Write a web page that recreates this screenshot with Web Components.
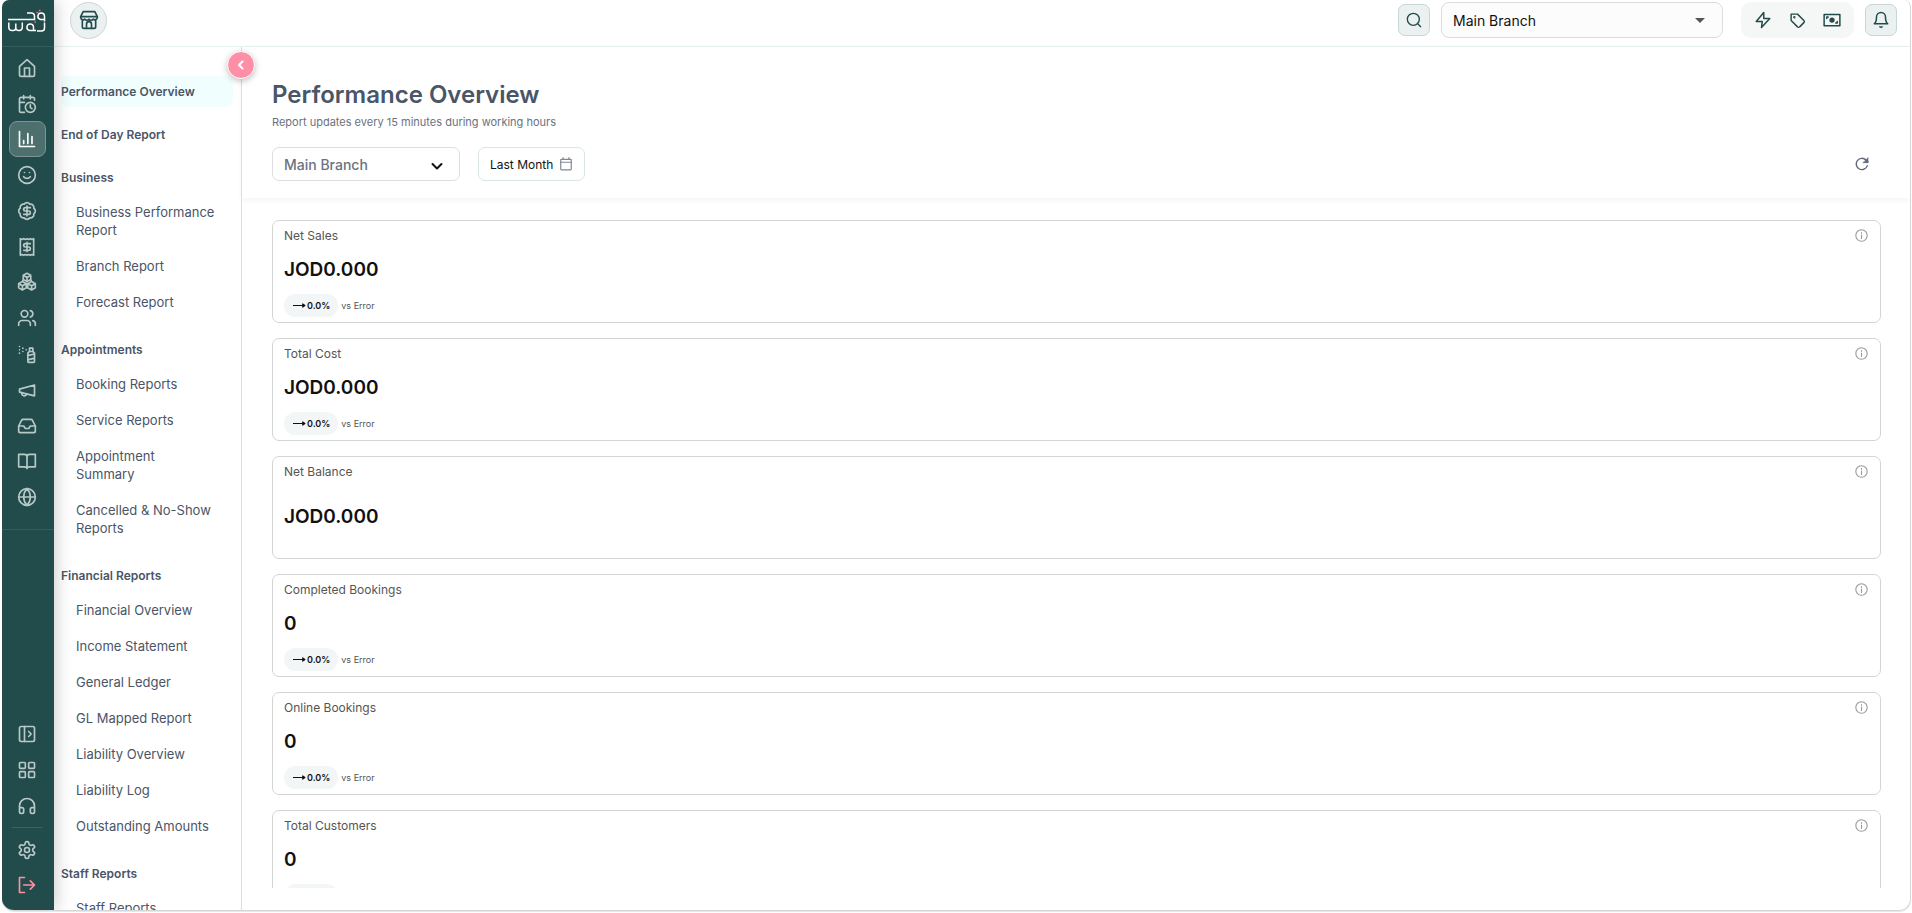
<!DOCTYPE html>
<html lang="en">
<head>
<meta charset="utf-8">
<title>Performance Overview</title>
<style>
  html, body {
    height: 100%;
    margin: 0;
  }
  body {
    background: #fff;
    font-family: Inter, "Open Sans", sans-serif;
    color: #4a5568;
    overflow: hidden;
  }
</style>
</head>
<body>
<app-shell></app-shell>

<script>
const icons = {
  home: '<path d="M3 10 12 2l9 8v10a2 2 0 0 1-2 2H5a2 2 0 0 1-2-2z"/><path d="M9 22V12h6v10"/>',
  calendarClock: '<path d="M21 7.500V6a2 2 0 0 0-2-2H5a2 2 0 0 0-2 2v14a2 2 0 0 0 2 2h4"/><path d="M16 2v4M8 2v4M3 10h6"/><circle cx="16" cy="16" r="6"/><path d="M16 13v3.200l2 1.300"/>',
  chart: '<path d="M3 3v18h18"/><path d="M8 17.500V14M13 17.500V5.500M18 17.500V9"/>',
  smile: '<circle cx="12" cy="12" r="10"/><path d="M8 14s1.500 2 4 2 4-2 4-2M9 9h.01M15 9h.01"/>',
  badge: '<path d="M3.850 8.620a4 4 0 0 1 4.780-4.770 4 4 0 0 1 6.740 0 4 4 0 0 1 4.780 4.780 4 4 0 0 1 0 6.740 4 4 0 0 1-4.770 4.780 4 4 0 0 1-6.750 0 4 4 0 0 1-4.780-4.770 4 4 0 0 1 0-6.760z"/><path d="M16 8h-6a2 2 0 1 0 0 4h4a2 2 0 1 1 0 4H8M12 18V6"/>',
  receipt: '<path d="M4 2v20l2-1 2 1 2-1 2 1 2-1 2 1 2-1 2 1V2l-2 1-2-1-2 1-2-1-2 1-2-1-2 1z"/><path d="M16 8h-6a2 2 0 1 0 0 4h4a2 2 0 1 1 0 4H8M12 17.500v-11"/>',
  boxes: '<path d="M12 1.500 7.500 4v5l4.500 2.500L16.500 9V4zM7.500 4 12 6.500 16.500 4M12 6.500v5M6.500 11.500 2 14v5l4.500 2.500L11 19v-5zM2 14l4.500 2.500L11 14M6.500 16.500v5M17.500 11.500 13 14v5l4.500 2.500L22 19v-5zM13 14l4.500 2.500L22 14M17.500 16.500v5M7.500 9l-1 2.500M16.500 9l1 2.500M11 14h2M11 19h2"/>',
  users: '<path d="M16 21v-2a4 4 0 0 0-4-4H6a4 4 0 0 0-4 4v2"/><circle cx="9" cy="7" r="4"/><path d="M22 21v-2a4 4 0 0 0-3-3.870M16 3.130a4 4 0 0 1 0 7.750"/>',
  spray: '<path d="M3 3h.01M7 5h.01M11 7h.01M3 7h.01M7 9h.01M3 11h.01"/><path d="M15 5h4v4h-4z"/><path d="m19 9 2 2v10a1 1 0 0 1-1 1h-6a1 1 0 0 1-1-1V11l2-2M13 14l8-2M13 19l8-2"/>',
  megaphone: '<path d="m3 11 18-5v13L3 14.500z"/><path d="M11.600 16.800a3 3 0 1 1-5.800-1.600"/>',
  inbox: '<path d="M22 12h-6l-2 3h-4l-2-3H2"/><path d="M5.450 5.110 2 12v6a2 2 0 0 0 2 2h16a2 2 0 0 0 2-2v-6l-3.450-6.890A2 2 0 0 0 16.760 4H7.240a2 2 0 0 0-1.790 1.110z"/>',
  book: '<path d="M2 4h7a3 3 0 0 1 3 3v14a3 3 0 0 0-3-2H2zM22 4h-7a3 3 0 0 0-3 3v14a3 3 0 0 1 3-2h7z"/>',
  globe: '<circle cx="12" cy="12" r="10"/><path d="M12 2a14.500 14.500 0 0 0 0 20 14.500 14.500 0 0 0 0-20M2 12h20"/>',
  panel: '<rect x="3" y="3" width="18" height="18" rx="2"/><path d="M9 3v18M14 9l3 3-3 3"/>',
  grid: '<rect x="3" y="3" width="7" height="7" rx="1"/><rect x="14" y="3" width="7" height="7" rx="1"/><rect x="14" y="14" width="7" height="7" rx="1"/><rect x="3" y="14" width="7" height="7" rx="1"/>',
  headphones: '<path d="M3 14h3a2 2 0 0 1 2 2v3a2 2 0 0 1-2 2H5a2 2 0 0 1-2-2v-7a9 9 0 0 1 18 0v7a2 2 0 0 1-2 2h-1a2 2 0 0 1-2-2v-3a2 2 0 0 1 2-2h3"/>',
  gear: '<path d="M12.220 2h-.44a2 2 0 0 0-2 2v.18a2 2 0 0 1-1 1.730l-.43.25a2 2 0 0 1-2 0l-.15-.08a2 2 0 0 0-2.730.73l-.22.38a2 2 0 0 0 .73 2.730l.15.1a2 2 0 0 1 1 1.720v.51a2 2 0 0 1-1 1.740l-.15.09a2 2 0 0 0-.73 2.730l.22.38a2 2 0 0 0 2.730.73l.15-.08a2 2 0 0 1 2 0l.43.25a2 2 0 0 1 1 1.730V20a2 2 0 0 0 2 2h.44a2 2 0 0 0 2-2v-.18a2 2 0 0 1 1-1.730l.43-.25a2 2 0 0 1 2 0l.15.08a2 2 0 0 0 2.730-.73l.22-.39a2 2 0 0 0-.73-2.730l-.15-.08a2 2 0 0 1-1-1.740v-.5a2 2 0 0 1 1-1.740l.15-.09a2 2 0 0 0 .73-2.730l-.22-.38a2 2 0 0 0-2.730-.73l-.15.08a2 2 0 0 1-2 0l-.43-.25a2 2 0 0 1-1-1.730V4a2 2 0 0 0-2-2z"/><circle cx="12" cy="12" r="3"/>',
  logout: '<path d="M9 3H3v18h6M8 12h13M16 7l5 5-5 5"/>',
  shop: '<path d="M5 2h14l3 6v1a3 3 0 0 1-5 2 3 3 0 0 1-5 0 3 3 0 0 1-5 0 3 3 0 0 1-5-2V8zM2 8h20M4 12v8a2 2 0 0 0 2 2h12a2 2 0 0 0 2-2v-8M9 22v-5a3 3 0 0 1 6 0v5"/>',
  search: '<circle cx="11" cy="11" r="9"/><path d="m18 18 4 4"/>',
  bolt: '<path d="M13 2 3 14h8l-1 8 11-12h-8z"/>',
  tag: '<path d="M3 3h9l9 9a2 2 0 0 1 0 3l-6 6a2 2 0 0 1-3 0l-9-9z"/><circle cx="7.500" cy="7.500" r=".7"/>',
  cash: '<path d="M1.500 4.500h21v15h-21z"/><circle cx="12" cy="12" r="2.500" fill="currentColor"/><path d="M5 10V8h2M19 14v2h-2"/>',
  bell: '<path d="M6 8a6 6 0 0 1 12 0c0 7 3 9 3 9H3s3-2 3-9M10.500 21a2 2 0 0 0 3 0"/>',
  left: '<path d="m15 5-7 7 7 7"/>',
  down: '<path d="m3 8 9 9 9-9"/>',
  calendar: '<rect x="3" y="4" width="18" height="18" rx="1"/><path d="M7 1v3M17 1v3M3 9h18"/>',
  refresh: '<path d="M20 14.500A8.500 8.500 0 1 1 18 6l3 3"/><path d="M21 3v7h-7z" fill="currentColor" stroke-width="1"/>',
  info: '<circle cx="12" cy="12" r="10.500"/><path d="M12 11v6.500M12 6.500v1.500"/>',
  arrow: '<path d="M0 12h21M18 9l4 3-4 3z" fill="currentColor"/>'
};

class BaseElement extends HTMLElement {
  constructor() {
    super();
    this.attachShadow({mode: 'open'});
  }

  connectedCallback() {
    this.shadowRoot.innerHTML = this.template;
  }
}

customElements.define('svg-icon', class SvgIcon extends BaseElement {
  get template() {
    const size = this.getAttribute('size') || 20;
    const stroke = this.getAttribute('stroke') || 2;
    return `
<style>
  :host {
    display: inline-flex;
    flex: none;
  }
</style>
<svg width="${size}" height="${size}" viewBox="0 0 24 24" fill="none" stroke="currentColor" stroke-width="${stroke}" stroke-linecap="round" stroke-linejoin="round" aria-hidden="true">${icons[this.getAttribute('name')]}</svg>
    `;
  }
});

customElements.define('brand-logo', class BrandLogo extends BaseElement {
  get template() {
    return `
<style>
  :host {
    display: block;
    height: 24px;
  }
</style>
<svg width="38" height="24" viewBox="0 0 38 24" fill="none" stroke="#fff" stroke-width="1.500" role="img" aria-label="Logo">
  <path d="M0 10.500h26.500V7a3 3 0 0 0-3-3H19"/>
  <path d="M37 10.500h-4.500A3.300 3.300 0 1 1 36.500 7v5.500"/>
  <path d="M.8 13.500v5a3 3 0 0 0 3 3h1.500a2.500 2.500 0 0 0 2.500-2.500v-4.500M7.800 19a2.500 2.500 0 0 0 2.500 2.500h1a3 3 0 0 0 3-3v-5"/>
  <path d="M25.500 21.500h-4a3.300 3.300 0 1 1 4-3.500v3.500h2.500M29 22h4.500a3 3 0 0 0 3-3v-5.500"/>
  <path d="M28.500 3.500h2M31 1.500h1.500M26.500 13h1.500" stroke="#ff6b81"/>
</svg>
    `;
  }
});

customElements.define('rail-button', class RailButton extends BaseElement {
  get template() {
    return `
<style>
  :host {
    display: flex;
    flex: 1;
    min-height: 0;
    align-items: center;
    justify-content: center;
    color: #b8c8c7;
  }
  :host([danger]) {
    color: #ff8fa3;
  }
  button {
    display: flex;
    align-items: center;
    justify-content: center;
    width: 37px;
    height: 36px;
    padding: 0;
    border: 1px solid transparent;
    border-radius: 8px;
    background: none;
    color: inherit;
  }
  :host([active]) button {
    background: #4d706f;
    border-color: #7b9594;
    color: #fff;
  }
</style>
<button aria-label="${this.getAttribute('label')}"><svg-icon name="${this.getAttribute('icon')}"></svg-icon></button>
    `;
  }
});

customElements.define('nav-rail', class NavRail extends BaseElement {
  get template() {
    const main = ['home', 'calendarClock', 'chart', 'smile', 'badge', 'receipt', 'boxes', 'users', 'spray', 'megaphone', 'inbox', 'book', 'globe'];
    const tools = ['panel', 'grid', 'headphones'];
    const button = name => `<rail-button icon="${name}" label="${name}"${name === 'chart' ? ' active' : ''}></rail-button>`;
    return `
<style>
  :host {
    display: flex;
    flex-direction: column;
    flex: none;
    width: 52px;
    box-sizing: border-box;
    background: #214c4b;
    box-shadow: 2px 0 16px rgba(0,0,0,.2);
    z-index: 2;
  }
  .logo {
    display: flex;
    justify-content: center;
    box-sizing: border-box;
    height: 47px;
    padding: 9px 2px 0 0;
    border-bottom: 1px solid #34605c;
  }
  nav {
    display: flex;
    flex-direction: column;
    padding-right: 2px;
  }
  .main {
    height: 465px;
    padding-top: 3px;
    padding-bottom: 14px;
    border-bottom: 1px solid #34605c;
  }
  .tools {
    height: 108px;
    margin-top: auto;
  }
  .account {
    height: 71px;
    padding-bottom: 7px;
  }
  hr {
    width: 30px;
    height: 1px;
    margin: 3px 11px 4px 10px;
    border: 0;
    background: #3d6361;
  }
</style>
<div class="logo"><brand-logo></brand-logo></div>
<nav class="main">${main.map(button).join('')}</nav>
<nav class="tools">${tools.map(button).join('')}</nav>
<hr>
<nav class="account">
  <rail-button icon="gear" label="Settings"></rail-button>
  <rail-button icon="logout" label="Log out" danger></rail-button>
</nav>
    `;
  }
});

customElements.define('top-bar', class TopBar extends BaseElement {
  get template() {
    return `
<style>
  :host {
    display: flex;
    align-items: center;
    flex: none;
    box-sizing: border-box;
    height: 47px;
    padding: 0 13px 6px 16px;
    border-bottom: 1px solid #e8f1f1;
  }
  button {
    display: flex;
    align-items: center;
    justify-content: center;
    padding: 0;
    border: 0;
    background: none;
    color: #214c4b;
  }
  .shop,
  .square {
    width: 32px;
    height: 32px;
    background: #ebf0f0;
    border: 1px solid #c9d6d5;
    border-radius: 7px;
  }
  .shop {
    width: 37px;
    height: 37px;
    border-radius: 50%;
    margin-right: auto;
  }
  .branch {
    position: relative;
    margin: 0 18px 0 11px;
  }
  select {
    appearance: none;
    display: block;
    width: 282px;
    height: 36px;
    padding: 0 11px;
    border: 1px solid #dcdcdc;
    border-radius: 8px;
    background: #fcfcfc;
    font: 14px Inter, sans-serif;
    color: #111;
  }
  .branch::after {
    content: "";
    position: absolute;
    right: 18px;
    top: 16px;
    border: 5px solid transparent;
    border-top-color: #555;
    border-bottom: 0;
  }
  .quick {
    display: flex;
    align-items: center;
    justify-content: space-around;
    box-sizing: border-box;
    width: 113px;
    height: 36px;
    margin-right: 11px;
    padding: 0 4px;
    border-radius: 10px;
    background: #f5f7f7;
  }
</style>
<button class="shop" aria-label="Shop"><svg-icon name="shop" size="20"></svg-icon></button>
<button class="square" aria-label="Search"><svg-icon name="search" size="16"></svg-icon></button>
<div class="branch"><select aria-label="Branch"><option>Main Branch</option></select></div>
<div class="quick">
  <button aria-label="Quick actions"><svg-icon name="bolt" size="18"></svg-icon></button>
  <button aria-label="Offers"><svg-icon name="tag" size="17"></svg-icon></button>
  <button aria-label="Payments"><svg-icon name="cash" size="18"></svg-icon></button>
</div>
<button class="square" aria-label="Notifications"><svg-icon name="bell" size="18"></svg-icon></button>
    `;
  }
});

customElements.define('menu-section', class MenuSection extends BaseElement {
  get template() {
    const items = (this.getAttribute('items') || '').split('|').filter(item => item);
    return `
<style>
  :host {
    display: block;
  }
  h2 {
    margin: 0;
    height: 31px;
    line-height: 31px;
    border-radius: 7px;
    font-size: 12px;
    font-weight: 600;
  }
  :host([active]) h2 {
    background: #f0fffe;
  }
  a {
    color: inherit;
    text-decoration: none;
  }
  ul {
    margin: 0;
    padding: 1px 16px 2px 15px;
    list-style: none;
  }
  li {
    padding: 9px 0;
    font-size: 13px;
    line-height: 18px;
  }
</style>
<h2>${items.length ? this.getAttribute('heading') : `<a href="#">${this.getAttribute('heading')}</a>`}</h2>
${items.length ? `<ul>${items.map(item => `<li><a href="#">${item}</a></li>`).join('')}</ul>` : ''}
    `;
  }
});

customElements.define('report-menu', class ReportMenu extends BaseElement {
  get template() {
    return `
<style>
  :host {
    position: relative;
    display: block;
    flex: none;
    box-sizing: border-box;
    width: 188px;
    border-right: 1px solid #dedede;
  }
  nav {
    display: flex;
    flex-direction: column;
    gap: 12px;
    box-sizing: border-box;
    height: 100%;
    padding: 29px 8px 0 7px;
    overflow: hidden;
  }
  menu-section {
    flex: none;
  }
  .collapse {
    position: absolute;
    top: 4px;
    right: -14px;
    z-index: 3;
    display: flex;
    align-items: center;
    justify-content: center;
    width: 28px;
    height: 28px;
    padding: 0;
    border: 1px solid #fff;
    border-radius: 50%;
    background: #ff8fa6;
    color: #fff;
    box-shadow: 0 2px 6px rgba(0,0,0,.25);
  }
</style>
<nav>
  <menu-section heading="Performance Overview" active></menu-section>
  <menu-section heading="End of Day Report"></menu-section>
  <menu-section heading="Business" items="Business Performance Report|Branch Report|Forecast Report"></menu-section>
  <menu-section heading="Appointments" items="Booking Reports|Service Reports|Appointment<br>Summary|Cancelled &amp;amp; No-Show Reports"></menu-section>
  <menu-section heading="Financial Reports" items="Financial Overview|Income Statement|General Ledger|GL Mapped Report|Liability Overview|Liability Log|Outstanding Amounts"></menu-section>
  <menu-section heading="Staff Reports" items="Staff Reports"></menu-section>
</nav>
<button class="collapse" aria-label="Collapse menu"><svg-icon name="left" size="12" stroke="4"></svg-icon></button>
    `;
  }
});

customElements.define('report-header', class ReportHeader extends BaseElement {
  get template() {
    return `
<style>
  :host {
    display: block;
    flex: none;
    padding: 31px 30px 17px;
    box-shadow: 0 2px 6px rgba(0,0,0,.05);
  }
  h1 {
    margin: 0;
    font-size: 24px;
    line-height: 34px;
    font-weight: 600;
  }
  p {
    margin: 1px 0 16px;
    font-size: 11px;
    line-height: 18px;
    color: #6b7280;
  }
  .filters {
    display: flex;
    align-items: center;
  }
  .branch {
    position: relative;
    margin-right: 18px;
  }
  .branch svg-icon {
    position: absolute;
    right: 17px;
    top: 13px;
    color: #111;
    pointer-events: none;
  }
  select {
    appearance: none;
    display: block;
    width: 188px;
    height: 34px;
    padding: 0 11px;
    border: 1px solid #dcdfe2;
    border-radius: 7px;
    background: #fff;
    font: 500 14px Inter, sans-serif;
    color: #6b7280;
  }
  button {
    display: flex;
    align-items: center;
    gap: 6px;
    height: 34px;
    padding: 0 11px;
    border: 1px solid #d9e6e4;
    border-radius: 7px;
    background: #fff;
    font: 12px Inter, sans-serif;
    color: #111;
  }
  button svg-icon {
    color: #7f8694;
  }
  .refresh {
    margin-left: auto;
    border: 0;
    padding: 0 10px;
  }
  .refresh svg-icon {
    color: #5f6678;
  }
</style>
<h1>Performance Overview</h1>
<p>Report updates every 15 minutes during working hours</p>
<div class="filters">
  <div class="branch">
    <select aria-label="Report branch"><option>Main Branch</option></select>
    <svg-icon name="down" size="12" stroke="4"></svg-icon>
  </div>
  <button>Last Month <svg-icon name="calendar" size="14"></svg-icon></button>
  <button class="refresh" aria-label="Refresh"><svg-icon name="refresh" size="16"></svg-icon></button>
</div>
    `;
  }
});

customElements.define('metric-card', class MetricCard extends BaseElement {
  get template() {
    const change = this.getAttribute('change');
    return `
<style>
  :host {
    display: flex;
    flex-direction: column;
    flex: none;
    box-sizing: border-box;
    height: 103px;
    padding: 5px 11px;
    border: 1px solid #d3d5d5;
    border-radius: 7px;
  }
  header {
    display: flex;
    align-items: center;
    justify-content: space-between;
    height: 18px;
    padding-right: 1px;
    font-size: 12px;
    color: #555;
  }
  header svg-icon {
    color: #999;
  }
  .value {
    display: flex;
    align-items: center;
    flex: 1;
    font-size: 19px;
    font-weight: 600;
    color: #111;
  }
  footer {
    display: flex;
    align-items: center;
    gap: 3px;
    font-size: 9px;
    color: #555;
  }
  .pill {
    display: flex;
    align-items: center;
    gap: 1px;
    height: 23px;
    padding: 0 8px 0 9px;
    border-radius: 12px;
    background: #f2f6f6;
    font-weight: 600;
    color: #111;
  }
</style>
<header><slot></slot><svg-icon name="info" size="13"></svg-icon></header>
<div class="value">${this.getAttribute('value')}</div>
${change ? `<footer><span class="pill"><svg-icon name="arrow" size="13"></svg-icon>${change}</span> vs Error</footer>` : ''}
    `;
  }
});

customElements.define('metric-list', class MetricList extends BaseElement {
  get template() {
    return `
<style>
  :host {
    display: flex;
    flex-direction: column;
    gap: 15px;
    flex: 1;
    min-height: 0;
    margin: 22px 29px 22px 30px;
    overflow: hidden;
  }
</style>
<metric-card value="JOD0.000" change="0.0%">Net Sales</metric-card>
<metric-card value="JOD0.000" change="0.0%">Total Cost</metric-card>
<metric-card value="JOD0.000">Net Balance</metric-card>
<metric-card value="0" change="0.0%">Completed Bookings</metric-card>
<metric-card value="0" change="0.0%">Online Bookings</metric-card>
<metric-card value="0" change="0.0%">Total Customers</metric-card>
    `;
  }
});

customElements.define('app-shell', class AppShell extends BaseElement {
  get template() {
    return `
<style>
  :host {
    display: flex;
    box-sizing: border-box;
    height: calc(100vh - 2px);
    margin: 0 1px 2px 2px;
    border: solid #d6d6d6;
    border-width: 0 1px 1px 0;
    border-radius: 7px 7px 12px 12px;
    box-shadow: 0 1px 1px rgba(0,0,0,.1);
    overflow: hidden;
  }
  .page {
    display: flex;
    flex-direction: column;
    flex: 1;
    min-width: 0;
  }
  .body {
    display: flex;
    flex: 1;
    min-height: 0;
  }
  main {
    display: flex;
    flex-direction: column;
    flex: 1;
    min-width: 0;
  }
</style>
<nav-rail></nav-rail>
<div class="page">
  <top-bar></top-bar>
  <div class="body">
    <report-menu></report-menu>
    <main>
      <report-header></report-header>
      <metric-list></metric-list>
    </main>
  </div>
</div>
    `;
  }
});
</script>
</body>
</html>
